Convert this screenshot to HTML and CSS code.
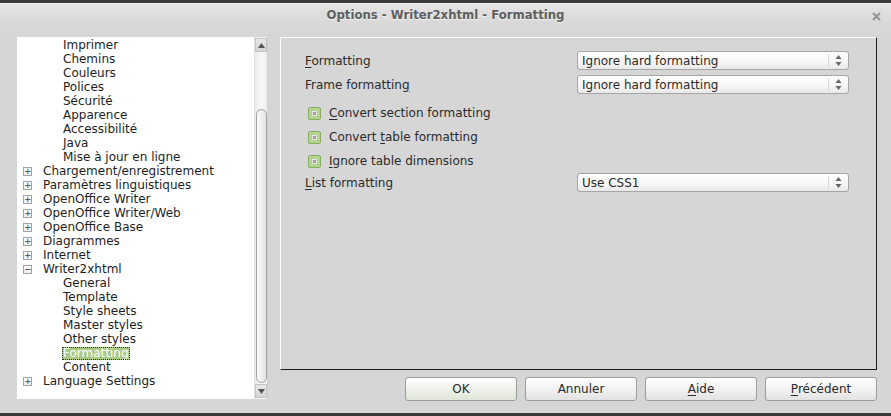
FILE: index.html
```html
<!DOCTYPE html>
<html>
<head>
<meta charset="utf-8">
<link rel="stylesheet" href="styles.css">
</head>
<body>
<div class="window">
  <div class="titlebar">
    <span class="title">Options - Writer2xhtml - Formatting</span>
    <svg class="close" width="9" height="9" viewBox="0 0 9 9"><path d="M1 1L8 8M8 1L1 8" stroke="#959595" stroke-width="2"/></svg>
  </div>
  <div class="content">
    <div class="tree">
      <ul class="items">
        <li class="child">Imprimer</li>
        <li class="child">Chemins</li>
        <li class="child">Couleurs</li>
        <li class="child">Polices</li>
        <li class="child">Sécurité</li>
        <li class="child">Apparence</li>
        <li class="child">Accessibilité</li>
        <li class="child">Java</li>
        <li class="child">Mise à jour en ligne</li>
        <li class="top"><span class="exp">+</span>Chargement/enregistrement</li>
        <li class="top"><span class="exp">+</span>Paramètres linguistiques</li>
        <li class="top"><span class="exp">+</span>OpenOffice Writer</li>
        <li class="top"><span class="exp">+</span>OpenOffice Writer/Web</li>
        <li class="top"><span class="exp">+</span>OpenOffice Base</li>
        <li class="top"><span class="exp">+</span>Diagrammes</li>
        <li class="top"><span class="exp">+</span>Internet</li>
        <li class="top"><span class="exp">−</span>Writer2xhtml</li>
        <li class="child">General</li>
        <li class="child">Template</li>
        <li class="child">Style sheets</li>
        <li class="child">Master styles</li>
        <li class="child">Other styles</li>
        <li class="child"><span class="selected">Formatting</span></li>
        <li class="child">Content</li>
        <li class="top"><span class="exp">+</span>Language Settings</li>
      </ul>
      <div class="scrollbar">
        <div class="sb-btn"><svg width="7" height="5" viewBox="0 0 7 5"><path d="M3.5 0L7 5H0Z" fill="#555"/></svg></div>
        <div class="sb-track"><div class="thumb"></div></div>
        <div class="sb-btn"><svg width="7" height="5" viewBox="0 0 7 5"><path d="M0 0H7L3.5 5Z" fill="#555"/></svg></div>
      </div>
    </div>
    <div class="main">
      <div class="panel">
        <div class="field">
          <span class="label"><u>F</u>ormatting</span>
          <div class="select"><span class="val">Ignore hard formatting</span><span class="spin"><svg width="7" height="13" viewBox="0 0 7 13"><path d="M3.5 1L6.5 5H0.5Z" fill="#666"/><path d="M0.5 8H6.5L3.5 12Z" fill="#666"/></svg></span></div>
        </div>
        <div class="field">
          <span class="label">Frame formattin<u>g</u></span>
          <div class="select"><span class="val">Ignore hard formatting</span><span class="spin"><svg width="7" height="13" viewBox="0 0 7 13"><path d="M3.5 1L6.5 5H0.5Z" fill="#666"/><path d="M0.5 8H6.5L3.5 12Z" fill="#666"/></svg></span></div>
        </div>
        <div class="checks">
          <div class="check"><svg class="cb" width="13" height="13" viewBox="0 0 13 13"><rect x="0.5" y="0.5" width="12" height="12" rx="1.5" fill="#b3d88a" stroke="#86ab62"/><rect x="3.5" y="3.5" width="6" height="6" fill="#f6f8f2" stroke="#b9c8a8"/><path d="M4.8 4.8L8.2 8.2M8.2 4.8L4.8 8.2" stroke="#8a8a8a" stroke-width="1.2"/></svg><span><u>C</u>onvert section formatting</span></div>
          <div class="check"><svg class="cb" width="13" height="13" viewBox="0 0 13 13"><rect x="0.5" y="0.5" width="12" height="12" rx="1.5" fill="#b3d88a" stroke="#86ab62"/><rect x="3.5" y="3.5" width="6" height="6" fill="#f6f8f2" stroke="#b9c8a8"/><path d="M4.8 4.8L8.2 8.2M8.2 4.8L4.8 8.2" stroke="#8a8a8a" stroke-width="1.2"/></svg><span>Convert <u>t</u>able formatting</span></div>
          <div class="check"><svg class="cb" width="13" height="13" viewBox="0 0 13 13"><rect x="0.5" y="0.5" width="12" height="12" rx="1.5" fill="#b3d88a" stroke="#86ab62"/><rect x="3.5" y="3.5" width="6" height="6" fill="#f6f8f2" stroke="#b9c8a8"/><path d="M4.8 4.8L8.2 8.2M8.2 4.8L4.8 8.2" stroke="#8a8a8a" stroke-width="1.2"/></svg><span><u>I</u>gnore table dimensions</span></div>
        </div>
        <div class="field">
          <span class="label"><u>L</u>ist formatting</span>
          <div class="select"><span class="val">Use CSS1</span><span class="spin"><svg width="7" height="13" viewBox="0 0 7 13"><path d="M3.5 1L6.5 5H0.5Z" fill="#666"/><path d="M0.5 8H6.5L3.5 12Z" fill="#666"/></svg></span></div>
        </div>
      </div>
      <div class="buttons">
        <div class="btn default">OK</div>
        <div class="btn">Annuler</div>
        <div class="btn"><u>A</u>ide</div>
        <div class="btn"><u>P</u>récédent</div>
      </div>
    </div>
  </div>
</div>
</body>
</html>
```
FILE: styles.css
```css
* { box-sizing: border-box; }
html, body { margin: 0; padding: 0; }
body {
  width: 891px;
  height: 416px;
  overflow: hidden;
  background: #3a3a3a;
  font-family: "DejaVu Sans", "Liberation Sans", sans-serif;
  font-size: 12px;
  color: #2a2a2a;
}
u { text-decoration: underline; text-underline-offset: 2px; }

.window {
  margin-top: 3px;
  height: 410px;
  background: #d6d6d6;
  display: flex;
  flex-direction: column;
}
.titlebar {
  height: 34px;
  position: relative;
  display: flex;
  justify-content: center;
  padding-top: 3px;
  border-top: 1px solid #f2f2f2;
  background: linear-gradient(#e4e4e4, #d8d8d8 60%, #d6d6d6);
}
.title {
  font-family: "DejaVu Sans Condensed", "DejaVu Sans", sans-serif;
  font-stretch: condensed;
  font-weight: bold;
  font-size: 13px;
  line-height: 16px;
  color: #5e5e5e;
  text-shadow: 0 1px 0 rgba(255,255,255,0.6);
}
.close {
  position: absolute;
  right: 10px;
  top: 8px;
}

.content {
  display: flex;
  padding-left: 17px;
}

/* tree */
.tree {
  width: 251px;
  height: 362px;
  background: #fff;
  display: flex;
}
.items {
  list-style: none;
  margin: 0;
  padding: 1px 0 0 0;
  flex: 1;
  color: #1e1e1e;
}
.items li {
  height: 14px;
  line-height: 14px;
  white-space: nowrap;
  display: flex;
  align-items: center;
}
.items .child { padding-left: 46px; }
.items .top { padding-left: 6px; }
.exp {
  width: 9px;
  height: 9px;
  border: 1px solid #a4a4a4;
  background: linear-gradient(#fff, #ededed);
  font-size: 9px;
  line-height: 7px;
  text-align: center;
  color: #444;
  margin-right: 11px;
  flex: none;
}
.selected {
  background: #aac984;
  color: #fff;
  outline: 1px dotted #333;
  outline-offset: -1px;
  padding: 0 1px;
  line-height: 13px;
  margin-left: -1px;
}

.scrollbar {
  width: 14px;
  display: flex;
  flex-direction: column;
  padding: 1px 0;
  background: linear-gradient(90deg, #ececec, #f8f8f8 50%, #f0f0f0);
  border-left: 1px solid #e2e2e2;
  border-right: 1px solid #d0d0d0;
}
.sb-btn {
  height: 14px;
  display: flex;
  align-items: center;
  justify-content: center;
  background: linear-gradient(#e8e8e8, #d4d4d4);
  border: 1px solid #c4c4c4;
}
.sb-track {
  flex: 1;
  display: flex;
  flex-direction: column;
  justify-content: flex-end;
  padding: 0 0 1px 1px;
}
.thumb {
  height: 274px;
  width: 11px;
  border: 1px solid #a2a2a2;
  border-radius: 6px;
  background: linear-gradient(90deg, #fafafa, #e4e4e4);
}

/* right side */
.main {
  margin-left: 12px;
  width: 597px;
  display: flex;
  flex-direction: column;
}
.panel {
  height: 333px;
  border: 1px solid;
  border-color: #fafafa #1c1c1c #1c1c1c #fafafa;
  padding: 13px 0 0 24px;
}
.field {
  display: flex;
  align-items: center;
  height: 19px;
}
.field + .field { margin-top: 5px; }
.label { width: 272px; }
.select {
  width: 272px;
  height: 19px;
  border: 1px solid #a6a6a6;
  border-radius: 3px;
  background: linear-gradient(#ffffff, #f6f6f6 60%, #e8e8e8);
  display: flex;
  align-items: center;
  padding-left: 4px;
  color: #2a2a2a;
}
.val { flex: 1; }
.spin {
  width: 20px;
  height: 13px;
  border-left: 1px solid #d6d6d6;
  display: flex;
  justify-content: center;
  align-items: center;
}
.checks { margin-top: 7px; }
.check {
  height: 24px;
  display: flex;
  align-items: center;
  padding-left: 3px;
}
.cb { margin-right: 8px; flex: none; }

.buttons {
  display: flex;
  justify-content: flex-end;
  gap: 8px;
  margin-top: 7px;
}
.btn {
  width: 112px;
  height: 24px;
  border: 1px solid #9c9c9c;
  border-radius: 3px;
  background: linear-gradient(#ffffff, #f2f2f2 50%, #e2e2e2);
  display: flex;
  align-items: center;
  justify-content: center;
  color: #2a2a2a;
}
.btn.default {
  background: linear-gradient(#ffffff, #f0f2ec 50%, #dfe6d6);
}
```
